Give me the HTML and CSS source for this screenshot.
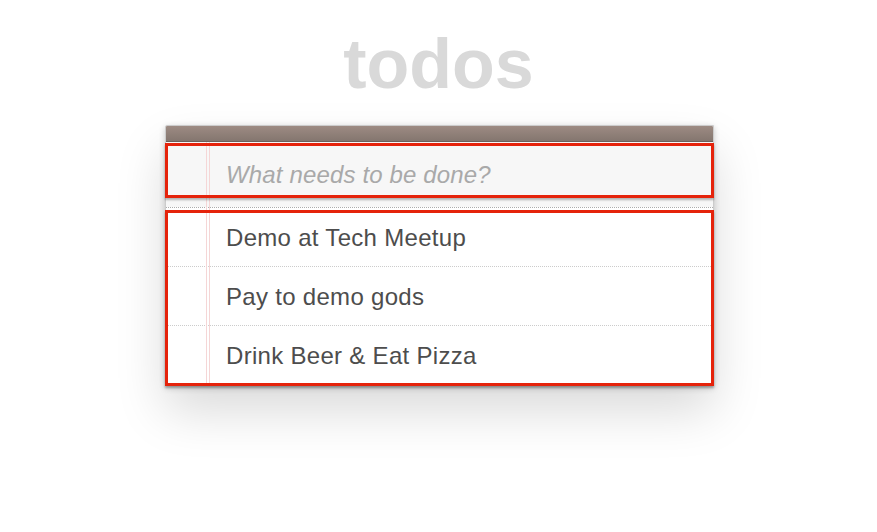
FILE: index.html
```html
<!DOCTYPE html>
<html lang="en">
<head>
<meta charset="utf-8">
<title>todos</title>
<link rel="stylesheet" href="styles.css">
</head>
<body>
<header class="hero">
  <h1 class="title">todos</h1>
</header>
<section class="app">
  <div class="app-bar"></div>
  <div class="new-wrap">
    <input class="new-todo" type="text" placeholder="What needs to be done?">
    <span class="hl hl-input"></span>
  </div>
  <section class="main">
    <ul class="todo-list">
      <li class="todo"><label class="todo-label">Demo at Tech Meetup</label></li>
      <li class="todo"><label class="todo-label">Pay to demo gods</label></li>
      <li class="todo"><label class="todo-label">Drink Beer &amp; Eat Pizza</label></li>
    </ul>
    <span class="hl hl-list"></span>
  </section>
</section>
</body>
</html>
```

FILE: styles.css
```css
html {
  height: 100%;
  background: #ffffff;
}

body {
  margin: 0;
  padding: 0 0 60px;
  min-height: 100%;
  box-sizing: border-box;
  background: #ffffff;
  font-family: "Liberation Sans", Arial, Helvetica, sans-serif;
  color: #4d4d4d;
}

.hero {
  padding-top: 29px;
}

.title {
  margin: 0;
  font-size: 70px;
  line-height: 70px;
  font-weight: bold;
  text-align: center;
  color: #d9d9d9;
}

.app {
  position: relative;
  width: 547px;
  margin: 26px 0 0 calc(50% - 273.5px);
  background: #ffffff;
  border: 1px solid #cccccc;
  border-top-left-radius: 2px;
  box-shadow: 0 2px 6px 0 rgba(0, 0, 0, 0.2), 0 25px 50px 0 rgba(0, 0, 0, 0.15);
}

.app::before {
  content: "";
  position: absolute;
  top: 0;
  left: 40px;
  width: 2px;
  height: 100%;
  border-left: 1px solid #f5d6d6;
  border-right: 1px solid #f5d6d6;
  z-index: 1;
  pointer-events: none;
}

.app-bar {
  position: relative;
  z-index: 2;
  height: 15px;
  border-bottom: 1px solid #6c615c;
  background: linear-gradient(to bottom, #9d8b83, #84766f);
  border-top-left-radius: 1px;
  border-top-right-radius: 1px;
}

.new-wrap {
  position: relative;
}

.new-todo {
  display: block;
  box-sizing: border-box;
  width: 100%;
  margin: 0;
  border: 0;
  outline: none;
  padding: 16px 15px 15px 60px;
  font-family: "Liberation Sans", Arial, Helvetica, sans-serif;
  font-size: 24px;
  line-height: 34px;
  letter-spacing: 0.15px;
  color: #4d4d4d;
  background: rgba(0, 0, 0, 0.03);
}

.new-todo::placeholder {
  font-style: italic;
  color: #a9a9a9;
}

.main {
  position: relative;
  border-top: 1px dotted #adadad;
}

.todo-list {
  margin: 0;
  padding: 0;
  list-style: none;
}

.todo {
  font-size: 24px;
  border-bottom: 1px dotted #cccccc;
}

.todo-label {
  display: block;
  padding: 16px 15px 14px 60px;
  line-height: 28px;
  letter-spacing: 0.3px;
  color: #4d4d4d;
  white-space: pre;
}

.hl {
  position: absolute;
  left: -1px;
  right: -1px;
  box-sizing: border-box;
  border: 3px solid #e5230b;
  box-shadow: 0 2px 2px rgba(0, 0, 0, 0.28);
  pointer-events: none;
  z-index: 3;
}

.hl-input {
  top: 1px;
  height: 55px;
}

.hl-list {
  top: 2px;
  bottom: -1px;
}
```
